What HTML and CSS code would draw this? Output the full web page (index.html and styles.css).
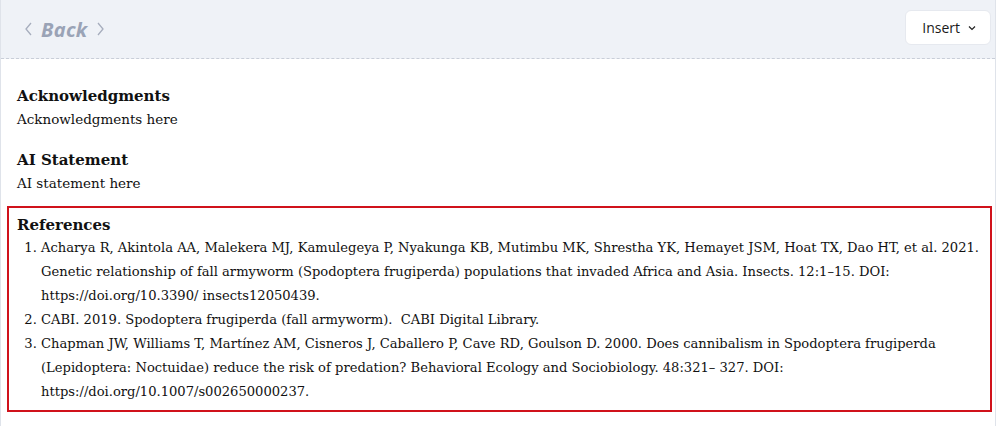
FILE: index.html
```html
<!DOCTYPE html>
<html>
<head>
<meta charset="utf-8">
<link rel="stylesheet" href="styles.css">
</head>
<body>
<div class="frame">
  <header class="topbar">
    <div class="back">
      <svg class="chev" width="9" height="14" viewBox="0 0 9 14"><path d="M7 1 L2 7 L7 13" fill="none" stroke="#a6adbd" stroke-width="1.3"/></svg>
      <span class="back-label">Back</span>
      <svg class="chev" width="9" height="14" viewBox="0 0 9 14"><path d="M2 1 L7 7 L2 13" fill="none" stroke="#a6adbd" stroke-width="1.3"/></svg>
    </div>
    <button class="insert">Insert
      <svg width="8" height="6" viewBox="0 0 8 6"><path d="M1 1.5 L4 4.5 L7 1.5" fill="none" stroke="#222" stroke-width="1.2"/></svg>
    </button>
  </header>
  <main class="content">
    <section class="sec ack">
      <h2>Acknowledgments</h2>
      <p>Acknowledgments here</p>
    </section>
    <section class="sec ai">
      <h2>AI Statement</h2>
      <p>AI statement here</p>
    </section>
    <section class="sec refs">
      <h2>References</h2>
      <ol>
        <li>Acharya R, Akintola AA, Malekera MJ, Kamulegeya P, Nyakunga KB, Mutimbu MK, Shrestha YK, Hemayet JSM, Hoat TX, Dao HT, et al. 2021. Genetic relationship of fall armyworm (Spodoptera frugiperda) populations that invaded Africa and Asia. Insects. 12:1–15. DOI: https://doi.org/10.3390/ insects12050439.</li>
        <li>CABI. 2019. Spodoptera frugiperda (fall armyworm).&nbsp; CABI Digital Library.</li>
        <li>Chapman JW, Williams T, Martínez AM, Cisneros J, Caballero P, Cave RD, Goulson D. 2000. Does cannibalism in Spodoptera frugiperda (Lepidoptera: Noctuidae) reduce the risk of predation? Behavioral Ecology and Sociobiology. 48:321– 327. DOI: https://doi.org/10.1007/s002650000237.</li>
      </ol>
    </section>
  </main>
</div>
</body>
</html>
```
FILE: styles.css
```css
html, body { margin: 0; padding: 0; background: #fff; }
body { font-family: "DejaVu Serif", serif; color: #111; }
.frame {
  width: 996px;
  height: 426px;
  border-left: 1px solid #dfe3ea;
  border-right: 1px solid #dfe3ea;
  box-sizing: border-box;
  overflow: hidden;
}
.topbar {
  height: 58px;
  background: #eff2f7;
  border-bottom: 1px dashed #c9ced8;
  display: flex;
  align-items: center;
  justify-content: space-between;
  padding: 0 4px 0 23px;
}
.back { display: flex; align-items: center; gap: 8px; }
.back-label {
  font-family: "Open Sans", sans-serif;
  font-weight: 700;
  font-style: italic;
  font-size: 20px;
  color: #9aa3b6;
  letter-spacing: 0.3px;
}
.insert {
  display: flex;
  align-items: center;
  gap: 8px;
  height: 35px;
  padding: 0 14px 0 16px;
  background: #fff;
  border: 1px solid #e6e9ef;
  border-radius: 6px;
  font-family: "Open Sans", sans-serif;
  font-size: 14px;
  color: #1a1a1a;
  margin-top: -3px;
}
.content { padding: 26px 3px 0 6px; }
.sec { padding: 0 10px; }
.ack { margin-bottom: 18px; }
.ai { margin-bottom: 11px; }
.sec h2 { margin: 0; font-size: 15px; font-weight: 700; line-height: 22px; }
.sec p { margin: 0; font-size: 13.5px; line-height: 24px; }
.refs {
  border: 2px solid #d0121b;
  padding: 6px 8px 6px 8px;
}
.refs ol { margin: 0; padding-left: 24px; font-size: 13.1px; line-height: 24px; }
```
